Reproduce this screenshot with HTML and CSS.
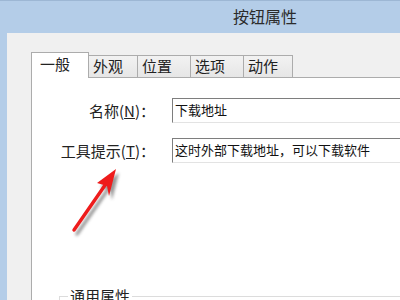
FILE: index.html
```html
<!DOCTYPE html>
<html lang="zh-CN">
<head>
    <meta charset="UTF-8">
    <title>按钮属性</title>
    <link rel="stylesheet" href="styles.css">
</head>
<body>

<div class="window">
    <div class="titlebar">按钮属性</div>
    <div class="dialog">
        <div class="tabs">
            <div class="tab active">一般</div>
            <div class="tab">外观</div>
            <div class="tab wide">位置</div>
            <div class="tab wide">选项</div>
            <div class="tab">动作</div>
        </div>
        <div class="panel">
            <div class="row">
                <label class="label">名称(<u>N</u>)：</label>
                <div class="input">下载地址</div>
            </div>
            <div class="row">
                <label class="label">工具提示(<u>T</u>)：</label>
                <div class="input">这时外部下载地址，可以下载软件</div>
            </div>
            <fieldset class="group">
                <legend>通用属性</legend>
            </fieldset>

            <svg class="arrow" width="70" height="80" viewBox="0 0 70 80">
                <defs>
                    <filter id="sh" x="-50%" y="-50%" width="200%" height="200%">
                        <feGaussianBlur stdDeviation="1.6"/>
                    </filter>
                </defs>
                <g transform="translate(3,4)" fill="#555" stroke="#555" opacity="0.6" filter="url(#sh)">
                    <line x1="10" y1="70" x2="46" y2="18" stroke-width="3.4" stroke-linecap="round"/>
                    <polygon points="52,9 33,23 43,26 45,36" stroke="none"/>
                </g>
                <g fill="#ee1c1c" stroke="#ee1c1c">
                    <line x1="10" y1="70" x2="46" y2="18" stroke-width="3.4" stroke-linecap="round"/>
                    <polygon points="52,9 33,23 43,26 45,36" stroke="none"/>
                </g>
            </svg>
        </div>
    </div>
</div>

</body>
</html>
```

FILE: styles.css
```css
*{
    margin: 0;
    padding: 0;
    box-sizing: border-box;
}
body{
    width: 400px;
    height: 300px;
    overflow: hidden;
    font-family: "Noto Sans CJK SC", "Liberation Sans", sans-serif;
    color: #1e1e1e;
}
.window{
    width: 480px;
    height: 300px;
    background: #b4cde8;
    border-top: 1px solid #9db7d4;
    display: flex;
    flex-direction: column;
}
.titlebar{
    height: 32px;
    line-height: 31px;
    padding-left: 233px;
    font-size: 16px;
    color: #2b2b2b;
}
.dialog{
    flex: 1;
    margin-left: 7px;
    background: #f0f0f0;
    padding: 19px 0 0 24px;
    display: flex;
    flex-direction: column;
    min-height: 0;
}
.tabs{
    display: flex;
    align-items: flex-end;
    height: 25px;
    position: relative;
    z-index: 1;
}
.tab{
    width: 50px;
    height: 22px;
    line-height: 20px;
    padding-left: 4px;
    font-size: 15px;
    color: #222;
    background: linear-gradient(#f2f2f2, #e6e6e6);
    border: 1px solid #acacac;
    border-bottom: none;
    margin-right: -1px;
}
.tab.wide{
    width: 54px;
}
.tab.active{
    width: 58px;
    height: 26px;
    line-height: 22px;
    padding-left: 8px;
    margin-bottom: -1px;
    background: #fff;
}
.panel{
    flex: 1;
    position: relative;
    background: #fff;
    border-top: 1px solid #acacac;
    border-left: 1px solid #acacac;
    padding-top: 20px;
    display: flex;
    flex-direction: column;
    gap: 15px;
    min-height: 0;
}
.row{
    display: flex;
    align-items: center;
    gap: 17px;
}
.label{
    width: 123px;
    text-align: right;
    font-size: 15px;
    line-height: 20px;
    color: #222;
}
.input{
    flex: 1;
    height: 25px;
    line-height: 22px;
    padding-left: 2px;
    font-size: 13px;
    color: #111;
    white-space: nowrap;
    background: #fff;
    border: 1px solid #e3e3e3;
    border-top-color: #7e7e7e;
    border-left-color: #7e7e7e;
}
.group{
    margin: 110px 0 0 27px;
    border: none;
    border-top: 1px solid #dcdcdc;
    border-left: 1px solid #dcdcdc;
    height: 40px;
    flex-shrink: 0;
}
.group legend{
    margin-left: 8px;
    padding: 0 2px;
    font-size: 15px;
    line-height: 16px;
    color: #222;
}
.arrow{
    position: absolute;
    left: 32px;
    top: 82px;
}
```
